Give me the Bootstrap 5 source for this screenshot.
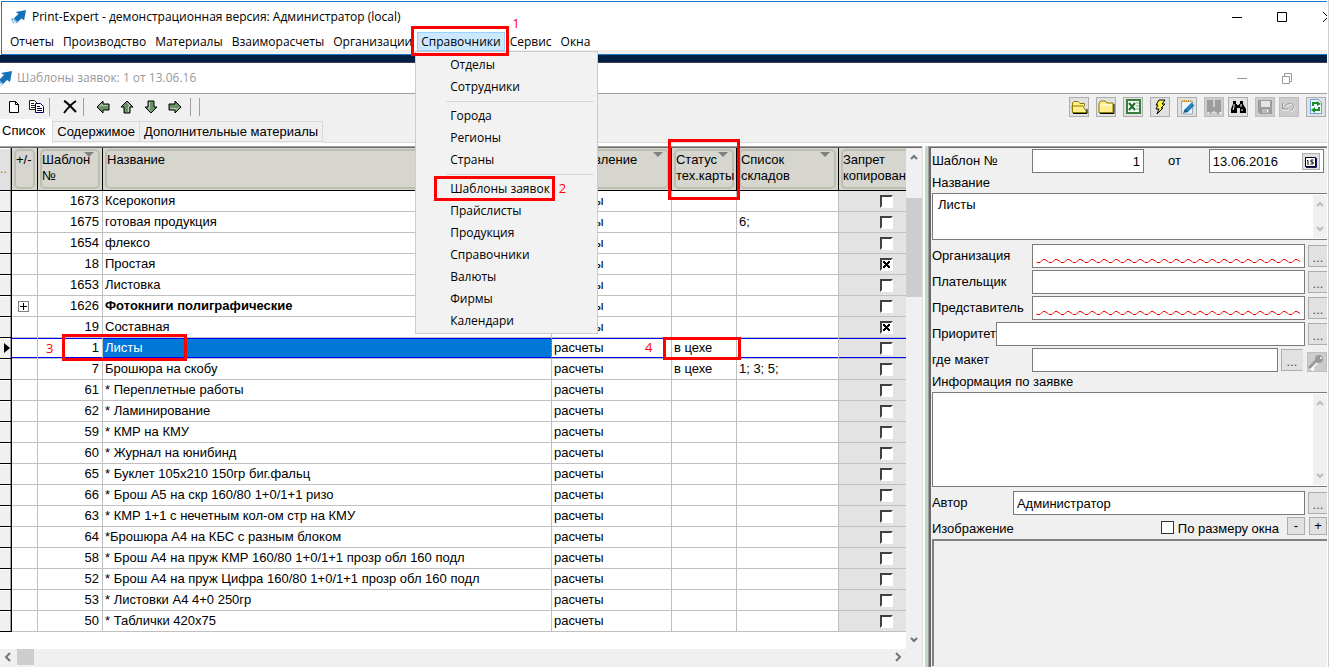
<!DOCTYPE html>
<html lang="ru">
<head>
<meta charset="utf-8">
<meta name="viewport" content="width=device-width, initial-scale=1">
<title>Print-Expert</title>
<link href="https://cdn.jsdelivr.net/npm/bootstrap@5.3.0/dist/css/bootstrap.min.css" rel="stylesheet">
<style>
:root{--ui:"Open Sans","Noto Sans",sans-serif;--grid:"Liberation Sans",Arial,sans-serif;--face:#f0f0f0;--btn:#e1e1e1}
body{font:13px/16px var(--grid);color:#000;background:#fff}
svg{display:block;flex:none}
input,textarea,button{font:inherit;color:inherit;border-radius:0}
.desk{min-height:100vh;border-right:1px solid #cfcfcf;padding-right:1px;overflow:hidden}
.ui{font:12px/16px var(--ui)}
.mainwin{border:1px solid #1979ca;border-right:0;margin:1px 0 0 1px}
.titlebar{height:30px;padding-left:9px;gap:6px}
.menubar{height:22px;padding-left:4px;gap:1px;border-bottom:4px solid var(--face);position:relative;z-index:5}
.menubar .nav-link{height:19px;line-height:17px;padding:0 3px;border:1px solid transparent;color:#000;white-space:nowrap}
.menubar .nav-link.active{background:#cce8ff;border-color:#99d1ff}
.menubar .dropdown-menu{font:inherit;top:19px;left:-2px;min-width:0;width:183px;margin:0;padding:2px 1px 1px;border:1px solid #ccc;border-radius:0;background:#f2f2f2;display:block}
.menubar .dropdown-item{line-height:16px;padding:3px 0 3px 33px;color:#000}
.menubar .dropdown-divider{margin:3px 2px 3px 29px;border-color:#d7d7d7;opacity:1}
.strip{height:8px;background:#001f42;border-bottom:1px solid #3a3f48}
.childbar{height:31px;color:#999;border-bottom:1px solid #a0a0a0;gap:5px}
.face{background:var(--face)}
.toolbar{height:25px;padding:0 1px 0 8px}
.tool{width:20px;height:20px;padding:0;border:1px solid #adadad;background:var(--btn);display:flex;align-items:center;justify-content:center}
.tool.apart{margin-right:3px}
.tool:disabled{background:#ccc;border-color:#bfbfbf}
.flat{border:0;background:none;padding:0}
.arrows{gap:10px}
.vline{width:1px;height:18px;background:#a0a0a0}
.tabs{height:24px;align-items:flex-end;border:0}
.tabs .tabbtn{height:21px;padding:0 4px;border:1px solid #d9d9d9;border-right:0;background:var(--face);margin-bottom:1px;white-space:nowrap}
.tabs .tabbtn:last-of-type{border-right:1px solid #d9d9d9}
.tabs .tabbtn.active{height:24px;margin:0;background:#fff;border-width:0;padding:0 7px 0 2px}
.tabs .rest{height:1px;background:#d9d9d9}
main{padding-top:3px}
.sunk{border-top:1px solid #a0a0a0;box-shadow:inset 0 1px #696969;padding-top:1px}
.gridtbl{table-layout:fixed;width:100%;border-collapse:separate;border-spacing:0}
.gridtbl th{height:43px;font-weight:400;vertical-align:top;padding:0;background:#d6d6ce;border-right:1px solid #000;border-bottom:1px solid #000;position:relative}
.gridtbl th>.cap{height:40px;margin:1px 2px;border:2px solid #bdbdb1;border-radius:5px;padding:1px 0;white-space:nowrap}
.gridtbl th:last-child,.gridtbl td:last-child{border-right:0}
.gridtbl th:last-child>.cap{margin-right:0;border-right:0;border-radius:5px 0 0 5px}
.gridtbl th .tri{position:absolute;top:4px;right:8px;border:5px solid transparent;border-top-color:#808080;border-bottom:0}
.gridtbl td{height:21px;line-height:18px;padding:0 2px;border-right:1px solid #c0c0c0;border-bottom:1px solid #c0c0c0;white-space:nowrap;position:relative;vertical-align:middle}
.gridtbl td:first-child,.gridtbl th:first-child{background:var(--face);border-right:1px solid #000;border-bottom:1px solid #000;box-shadow:inset -1px 0 #a0a0a0,inset 0 1px #fff}
.gridtbl th:first-child{background:#e1e1e1;vertical-align:middle;color:#b07000}
.gridtbl td.num{padding-right:3px;text-align:right}
.gridtbl td.ban{background:#e3e3e3;padding-left:41px}
.gridtbl tr.current td:not(:first-child){box-shadow:inset 0 1px #00f,inset 0 -1px #00f}
.gridtbl tr.current td.nm{background:#0078d7;color:#fff;border-right:1px dotted #f80}
.gridtbl input{appearance:none;display:block;width:13px;height:13px;margin:0;background:#fff;border:2px solid;border-color:#404040 #fff #fff #404040}
.gridtbl input:checked{background:linear-gradient(45deg,transparent 38%,#000 38% 62%,transparent 62%) center/7px 7px no-repeat,linear-gradient(-45deg,transparent 38%,#000 38% 62%,transparent 62%) center/7px 7px no-repeat,#fff}
.plus{width:11px;height:11px;padding:0;border:1px solid #808080;background:linear-gradient(#000,#000) center/7px 1px no-repeat,linear-gradient(#000,#000) center/1px 7px no-repeat,#fff;display:block;margin-left:4px}
.pointer{border:5px solid transparent;border-left:6px solid #000;border-right:0;width:0}
.vscroll{width:16px;padding:6px 0;gap:38px}
.vscroll .thumb{height:99px;background:#cdcdcd}
.hscroll{height:16px;padding-left:4px}
.hscroll .thumb{width:17px;height:16px;background:#cdcdcd;margin-left:5px}
.splitter{width:6px;border-left:1px solid #e3e3e3;border-right:3px solid #c5d8c5;background:#fff}
.side{width:399px;border-left:1px solid #a0a0a0;box-shadow:inset 2px 0 #696969,inset 0 1px #696969;border-top:1px solid #a0a0a0;padding:2px 0 1px 3px}
.frow{height:24px;margin-bottom:2px;display:flex}
.frow>label{padding-top:4px;white-space:nowrap}
.lab{width:100px}
.field{height:24px;min-width:0;border:1px solid #7a7a7a;background:#fff;padding:0 3px;outline:0}
.more{width:19px;height:22px;margin:1px 0 0 3px;padding:3px 0 0;line-height:16px;border:1px solid #adadad;border-right:0;background:var(--btn);color:#704a10;text-align:center}
.memo{border:1px solid #7a7a7a;border-right:0;background:#fff;display:flex}
.memo textarea{flex:1;min-width:0;border:0;outline:0;resize:none;padding:3px 5px;background:none}
.memo .bar{width:14px;margin:1px 0 1px;background:var(--face);display:flex;flex-direction:column;justify-content:space-between;padding:6px 3px}
.tall{height:95px}.low{height:47px}
.fit{appearance:none;width:13px;height:13px;border:1px solid #333;background:#fff}
.zoombtn{width:18px;height:18px;line-height:16px;border:1px solid #adadad;background:var(--btn);padding:0}
.preview{border:solid #808080;border-width:2px 0 0 2px}
.callout{position:absolute;border:3px solid #f00;pointer-events:none;z-index:4}
.step{position:absolute;color:#f00;font:13px/16px var(--ui);z-index:4}
.c-menu{inset:-6px -4px -6px -6px;z-index:1001}.s-menu{right:-15px;top:-17px}
.c-item{inset:-2px 41px -1px 17px}.s-item{right:30px;top:2px}
.c-head{inset:-9px -4px -10px -4px}
.c-row{top:-4px;left:50px;width:125px;height:27px}.s-row{left:34px;top:2px}
.c-state{inset:-1px -5px -2px -9px}.s-state{left:-27px;top:1px}
</style>
</head>
<body>
<svg width="0" height="0" class="position-absolute" aria-hidden="true">
 <defs>
  <symbol id="logo" viewBox="0 0 16 16"><path d="M5 2 16 0 14 11 11 9 7 13 3 9 8 4Z" fill="#1472b8"/><path d="M4 9 1 12M5 11 2 14M7 12 5 15M2 9 0 11" stroke="#5ba3d6" stroke-width="1.5" stroke-dasharray="2 1" fill="none"/></symbol>
  <symbol id="up" viewBox="0 0 8 6"><path d="M1 5 4 2 7 5" fill="none" stroke="currentColor" stroke-width="2"/></symbol>
  <symbol id="down" viewBox="0 0 8 6"><path d="M1 1 4 4 7 1" fill="none" stroke="currentColor" stroke-width="2"/></symbol>
  <symbol id="arrow" viewBox="0 0 14 14"><path d="M1 7 7 1V4H13V10H7V13Z" fill="#6b9168" stroke="#000"/><path d="M3 6.500 6 4V5.500H12" stroke="#b9d0b4" fill="none"/></symbol>
  <pattern id="zig" width="12" height="5" patternUnits="userSpaceOnUse"><path d="M0 2.500 1 3.500H4L7 .5H9L12 2.500" fill="none" stroke="#f00"/></pattern>
  <symbol id="folder" viewBox="0 0 17 14"><path d="M1 12.500V3L3 1H7L9 3H15V12.500Z" fill="#ffef8a" stroke="#8a7a00"/><path d="M2 13.500H16V4" stroke="#000" fill="none"/><path d="M3 5H14" stroke="#fff"/></symbol>
 </defs>
</svg>
<div class="desk d-flex flex-column">
 <header class="mainwin ui">
  <div class="titlebar d-flex align-items-center">
   <svg width="15" height="15"><use href="#logo"/></svg><span class="flex-fill">Print-Expert - демонстрационная версия: Администратор (local)</span>
   <svg width="96" height="12" fill="none" stroke="#000"><path d="M1 6.500H11M46.500 1.500H55.500V10.500H46.500ZM92 1 97 6 92 11"/></svg>
  </div>
  <ul class="nav menubar flex-nowrap">
   <li class="nav-item"><a class="nav-link" href="#">Отчеты</a></li>
   <li class="nav-item"><a class="nav-link" href="#">Производство</a></li>
   <li class="nav-item"><a class="nav-link" href="#">Материалы</a></li>
   <li class="nav-item"><a class="nav-link" href="#">Взаиморасчеты</a></li>
   <li class="nav-item"><a class="nav-link" href="#">Организации</a></li>
   <li class="nav-item dropdown position-relative"><a class="nav-link active" href="#" aria-expanded="true">Справочники</a>
    <ul class="dropdown-menu show">
     <li><a class="dropdown-item" href="#">Отделы</a></li>
     <li><a class="dropdown-item" href="#">Сотрудники</a></li>
     <li><hr class="dropdown-divider"></li>
     <li><a class="dropdown-item" href="#">Города</a></li>
     <li><a class="dropdown-item" href="#">Регионы</a></li>
     <li><a class="dropdown-item" href="#">Страны</a></li>
     <li><hr class="dropdown-divider"></li>
     <li class="position-relative"><a class="dropdown-item" href="#">Шаблоны заявок</a><span class="callout c-item"></span><span class="step s-item">2</span></li>
     <li><a class="dropdown-item" href="#">Прайслисты</a></li>
     <li><a class="dropdown-item" href="#">Продукция</a></li>
     <li><a class="dropdown-item" href="#">Справочники</a></li>
     <li><a class="dropdown-item" href="#">Валюты</a></li>
     <li><a class="dropdown-item" href="#">Фирмы</a></li>
     <li><a class="dropdown-item" href="#">Календари</a></li>
    </ul>
    <span class="callout c-menu"></span><span class="step s-menu">1</span>
   </li>
   <li class="nav-item"><a class="nav-link" href="#">Сервис</a></li>
   <li class="nav-item"><a class="nav-link" href="#">Окна</a></li>
  </ul>
 </header>
 <div class="strip"></div>
 <div class="childbar ui d-flex align-items-center">
  <svg width="12" height="15" viewBox="4 0 12 15"><use href="#logo" width="16" height="16"/></svg><span class="flex-fill">Шаблоны заявок: 1 от 13.06.16</span>
  <svg width="91" height="12" fill="none" stroke="#999"><path d="M1 6.500H11M46.500 4.500H53.500V11.500H46.500ZM48.500 4V1.500H55.500V9.500H54"/></svg>
 </div>
 <div class="face">
  <div class="toolbar d-flex align-items-center">
   <button class="flat" aria-label="Создать"><svg width="12" height="14"><path d="M1.500 1.500H7.500L10.500 4.500V12.500H1.500ZM7.500 1.500V4.500H10.500" fill="#fff" stroke="#000"/></svg></button>
   <button class="flat ms-2" aria-label="Копировать"><svg width="17" height="14"><path d="M1.500 .5H6.500L8.500 2.500V9.500H1.500ZM3 3.500H6M3 5.500H7M3 7.500H7" fill="#fff" stroke="#222"/><path d="M7.500 3.500H12.500L15.500 6.500V12.500H7.500ZM9 6.500H12M9 8.500H14M9 10.500H14" fill="#fff" stroke="#00005c"/></svg></button>
   <i class="vline ms-1"></i>
   <button class="flat ms-2 ps-1" aria-label="Удалить"><svg width="17" height="14"><path d="M2 1C5 2 11 9 14 12M14 1C9 4 5 9 2 13" stroke="#000" stroke-width="2" fill="none"/></svg></button>
   <i class="vline ms-1"></i>
   <div class="arrows d-flex ms-2 ps-1 me-2">
    <button class="flat" aria-label="Назад"><svg width="14" height="14"><use href="#arrow"/></svg></button>
    <button class="flat" aria-label="Вверх"><svg width="14" height="14"><g transform="rotate(90 7 7)"><use href="#arrow" width="14" height="14"/></g></svg></button>
    <button class="flat" aria-label="Вниз"><svg width="14" height="14"><g transform="rotate(-90 7 7)"><use href="#arrow" width="14" height="14"/></g></svg></button>
    <button class="flat" aria-label="Вперед"><svg width="14" height="14"><g transform="rotate(180 7 7)"><use href="#arrow" width="14" height="14"/></g></svg></button>
   </div>
   <i class="vline"></i><i class="vline ms-2 me-auto"></i>
   <div class="d-flex gap-1">
    <button class="tool apart" aria-label="Открыть"><svg width="17" height="14"><path d="M1.500 12.500V3L3 1.500H7L9 3.500H13.500V6M1.500 12.500 1 6H12L16 12.500Z" fill="#ffef8a" stroke="#8a7a00"/><path d="M2 13.500H16V9" stroke="#000" fill="none"/></svg></button>
    <button class="tool apart" aria-label="Папка"><svg width="17" height="14"><use href="#folder"/></svg></button>
    <button class="tool apart" aria-label="Excel"><svg width="17" height="17"><path d="M1 1H16V16H1Z" fill="#3b7d42"/><path d="M3 3H14V14H3Z" fill="#f3faf2"/><path d="M4 5 10 12M10 5 4 12" stroke="#216b2b" stroke-width="2"/><path d="M11 5H14M11 8H14M11 11H14" stroke="#7eb481"/></svg></button>
    <button class="tool apart" aria-label="Выполнить"><svg width="13" height="16"><path d="M5 1H11L8 5H11L7 9H9L3 15 5 10H2L4 6H2Z" fill="#fff44a" stroke="#000"/></svg></button>
    <button class="tool apart" aria-label="Изменить"><svg width="15" height="16"><path d="M1.500 2.500H12.500V15H1.500Z" fill="#eaf5ff" stroke="#99aabb"/><path d="M2 2H12" stroke="#c89932" stroke-width="2" stroke-dasharray="1 1"/><path d="M13 5 6 12" stroke="#2680bd" stroke-width="4"/><path d="M5 10 3 14 8 13Z" fill="#164e7a"/></svg></button>
    <button class="tool" disabled aria-label="Справка"><svg width="17" height="16"><path d="M1 1H7L8 4V1H15V13H13V15H11V13H5V15H3V13H1Z" fill="#9c9c9c"/><path d="M8 1V8M2 14H4M7 13H9M13 14H16" stroke="#fff"/></svg></button>
    <button class="tool apart" aria-label="Найти"><svg width="17" height="16"><path d="M3 2H6V5H7V6H9V5H10V2H13V5L16 10V14H10V9H7V14H1V10L3 5Z"/><path d="M4 5V8L3 11M11 5V8M12 10V12" stroke="#fff" fill="none"/></svg></button>
    <button class="tool" disabled aria-label="Сохранить"><svg width="16" height="16"><path d="M1 1H15V15H3L1 13Z" fill="#9c9c9c"/><path d="M4 2H13V8H4Z" fill="#e5e5e5"/><path d="M5 10H12V14H5Z" fill="#bbb"/><path d="M10 11H11V13H10Z" fill="#fff"/></svg></button>
    <button class="tool apart" disabled aria-label="Отменить"><svg width="16" height="14"><path d="M2 4V10H8M2 10C5 4 12 3 13 7C14 9 12 11 10 12" fill="none" stroke="#fff"/><path d="M1.500 3V9H7.500M2 9C5 3 11 2 12.500 6C13 8 11 10 10 11" fill="none" stroke="#999"/></svg></button>
    <button class="tool" aria-label="Обновить"><svg width="14" height="17"><path d="M1.500 1.500H9.500L12.500 4.500V15.500H1.500Z" fill="#eef7ff" stroke="#6d9edb"/><path d="M4 8V5H9M10 9V12H5" fill="none" stroke="#179126" stroke-width="2"/><path d="M8 3 12 6 8 8ZM6 9 2 12 6 15Z" fill="#179126"/></svg></button>
   </div>
  </div>
  <div class="tabs d-flex">
   <button class="tabbtn active">Список</button><button class="tabbtn">Содержимое</button><button class="tabbtn">Дополнительные материалы</button><span class="rest flex-fill"></span>
  </div>
 </div>
 <main class="flex-fill d-flex">
  <section class="flex-fill d-flex flex-column" style="min-width:0">
   <div class="sunk flex-fill d-flex">
    <div class="flex-fill" style="min-width:0">
     <table class="gridtbl">
      <colgroup><col style="width:12px"><col style="width:26px"><col style="width:65px"><col><col style="width:120px"><col style="width:65px"><col style="width:102px"><col style="width:67px"></colgroup>
      <thead><tr><th>..</th><th><div class="cap">+/-</div></th><th><div class="cap">Шаблон<br>№</div><i class="tri"></i></th><th><div class="cap">Название</div></th><th><div class="cap">Направление</div><i class="tri"></i></th><th><div class="cap">Статус<br>тех.карты</div><i class="tri"></i><span class="callout c-head"></span></th><th><div class="cap">Список<br>складов</div><i class="tri"></i></th><th><div class="cap">Запрет<br>копирован</div></th></tr></thead>
      <tbody id="rows"></tbody>
     </table>
    </div>
    <div class="vscroll face d-flex flex-column flex-shrink-0 align-items-center text-secondary">
     <svg width="8" height="6"><use href="#up"/></svg><div class="thumb w-100"></div><svg class="mt-auto" width="8" height="6"><use href="#down"/></svg>
    </div>
   </div>
   <div class="hscroll face d-flex align-items-center text-secondary">
    <svg width="8" height="10"><path d="M6 1 2 5 6 9" fill="none" stroke="currentColor" stroke-width="2"/></svg><div class="thumb"></div>
    <svg class="ms-auto me-3" width="12" height="10"><path d="M2 1 6 5 2 9" fill="none" stroke="currentColor" stroke-width="2"/></svg>
   </div>
   <div style="height:2px" class="face"></div>
  </section>
  <div class="splitter flex-shrink-0"></div>
  <form class="side face flex-shrink-0 d-flex flex-column">
   <div class="frow"><label class="lab" for="f1">Шаблон №</label><input id="f1" class="field text-end" style="width:112px" value="1"><label class="px-4" for="f2">от</label>
    <div class="position-relative ms-1"><input id="f2" class="field" style="width:115px" value="13.06.2016"><button type="button" class="tool position-absolute top-0 end-0 mt-1 me-1" style="width:18px;height:17px" aria-label="Календарь"><svg width="12" height="12"><path d="M.5 1.500H10.500V10.500H.5Z" fill="#fff" stroke="#000"/><path d="M11.500 2V11.500H1" stroke="#1a1a70" fill="none"/><path d="M3 4.500V9M2 4.500H3M8.500 4H6V6H8V8H5.500" stroke="#000" fill="none"/></svg></button></div></div>
   <label for="f3" style="height:18px">Название</label>
   <div class="memo low mb-1"><textarea id="f3">Листы</textarea><div class="bar" style="color:#bbb"><svg width="8" height="6"><use href="#up"/></svg><svg width="8" height="6"><use href="#down"/></svg></div></div>
   <div class="frow"><label class="lab" for="f4">Организация</label><div class="flex-fill position-relative d-flex"><input id="f4" class="field w-100"><svg class="position-absolute start-0 bottom-0 ms-1 mb-1" width="264" height="5"><rect width="264" height="5" fill="url(#zig)"/></svg></div><button type="button" class="more">...</button></div>
   <div class="frow"><label class="lab" for="f5">Плательщик</label><input id="f5" class="field flex-fill"><button type="button" class="more">...</button></div>
   <div class="frow"><label class="lab" for="f6">Представитель</label><div class="flex-fill position-relative d-flex"><input id="f6" class="field w-100"><svg class="position-absolute start-0 bottom-0 ms-1 mb-1" width="264" height="5"><rect width="264" height="5" fill="url(#zig)"/></svg></div><button type="button" class="more">...</button></div>
   <div class="frow"><label for="f7" style="width:64px">Приоритет</label><input id="f7" class="field flex-fill"><button type="button" class="more">...</button></div>
   <div class="frow"><label class="lab" for="f8">где макет</label><input id="f8" class="field flex-fill"><button type="button" class="more me-1 border-end" style="width:22px">...</button><button type="button" class="tool mt-1" disabled aria-label="Ключ"><svg width="17" height="17"><path d="M2 15 9 8M3 14 6 16" stroke="#fff" stroke-width="3"/><path d="M1 14 9 6" stroke="#999" stroke-width="3"/><circle cx="11" cy="5" r="4" fill="#999"/><circle cx="13" cy="4" r="1" fill="#fff"/></svg></button></div>
   <label for="f9" style="height:18px">Информация по заявке</label>
   <div class="memo tall mb-1"><textarea id="f9"></textarea><div class="bar" style="color:#bbb"><svg width="8" height="6"><use href="#up"/></svg><svg width="8" height="6"><use href="#down"/></svg></div></div>
   <div class="frow"><label for="f10" style="width:81px">Автор</label><input id="f10" class="field flex-fill" value="Администратор"><button type="button" class="more">...</button></div>
   <div class="d-flex" style="height:22px"><span class="me-auto pt-1">Изображение</span>
    <input type="checkbox" id="fit" class="fit mt-1 me-1"><label for="fit" class="pt-1">По размеру окна</label>
    <button type="button" class="zoombtn ms-2">-</button><button type="button" class="zoombtn ms-1">+</button></div>
   <div class="preview flex-fill"></div>
  </form>
 </main>
</div>
<script src="https://cdn.jsdelivr.net/npm/bootstrap@5.3.0/dist/js/bootstrap.bundle.min.js"></script>
<script>
const rows = [
 [1673,'Ксерокопия'],[1675,'готовая продукция','','6;'],[1654,'флексо'],[18,'Простая','','',true],[1653,'Листовка'],
 [1626,'Фотокниги полиграфические'],[19,'Составная','','',true],[1,'Листы','в цехе'],[7,'Брошюра на скобу','в цехе','1; 3; 5;'],
 [61,'* Переплетные работы'],[62,'* Ламинирование'],[59,'* КМР на КМУ'],[60,'* Журнал на юнибинд'],[65,'* Буклет 105х210 150гр биг.фальц'],
 [66,'* Брош А5 на скр 160/80 1+0/1+1 ризо'],[63,'* КМР 1+1 с нечетным кол-ом стр на КМУ'],[64,'*Брошюра А4 на КБС с разным блоком'],
 [58,'* Брош А4 на пруж КМР 160/80 1+0/1+1 прозр обл 160 подл'],[52,'* Брош А4 на пруж Цифра 160/80 1+0/1+1 прозр обл 160 подл'],
 [53,'* Листовки А4 4+0 250гр'],[50,'* Таблички 420х75']
];
document.getElementById('rows').innerHTML = rows.map(([id,name,state='',stock='',ban]) => {
 const cur = id === 1, group = id === 1626;
 return `<tr class="${cur?'current':''}"><td class="p-0">${cur?'<div class="pointer ms-1"></div>':''}</td>
 <td>${group?'<button class="plus" aria-label="Развернуть"></button>':''}${cur?'<span class="callout c-row"></span><span class="step s-row">3</span>':''}</td>
 <td class="num">${id}</td><td class="nm ${group?'fw-bold':''}">${name}</td><td>расчеты</td>
 <td>${state}${cur?'<span class="callout c-state"></span><span class="step s-state">4</span>':''}</td><td>${stock}</td>
 <td class="ban"><input type="checkbox" aria-label="Запрет копирования ${id}" ${ban?'checked':''}></td></tr>`;
}).join('');
</script>
</body>
</html>
